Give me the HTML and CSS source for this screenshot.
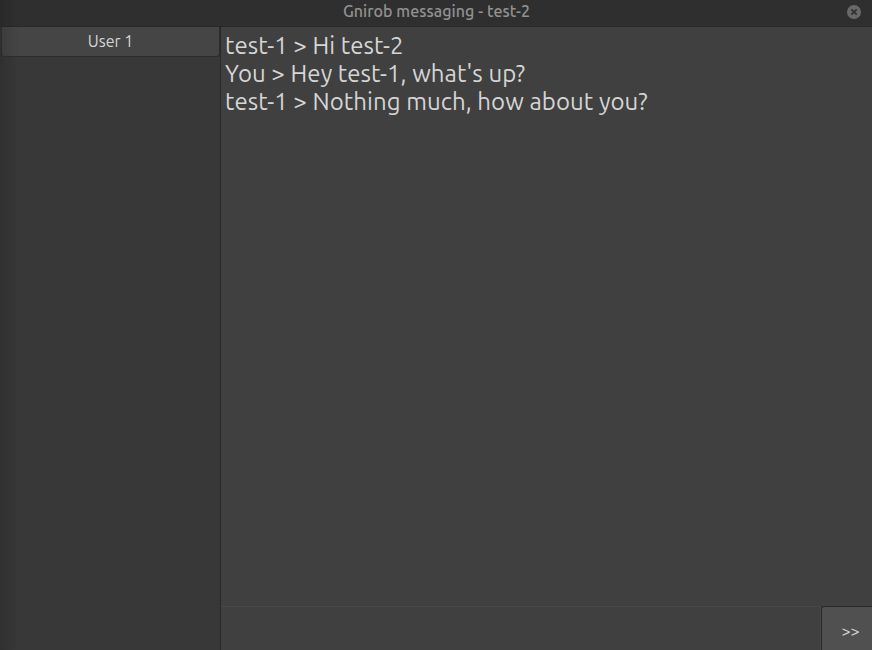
FILE: index.html
```html
<!DOCTYPE html>
<html lang="en">
<head>
<meta charset="utf-8">
<title>Gnirob messaging - test-2</title>
<link rel="stylesheet" href="styles.css">
</head>
<body>
<div class="window">
  <header class="titlebar">
    <h1 class="title">Gnirob messaging - test-2</h1>
    <button class="close" aria-label="Close">
      <svg width="14" height="14" viewBox="0 0 14 14"><circle cx="7" cy="7" r="7" fill="#69696c"/><path d="M4.3 4.3l5.4 5.4M9.7 4.3l-5.4 5.4" stroke="#303030" stroke-width="1.8"/></svg>
    </button>
  </header>
  <main class="body">
    <aside class="sidebar">
      <button class="user">User 1</button>
    </aside>
    <section class="chat">
      <div class="messages">
        <p class="message">test-1 &gt; Hi test-2</p>
        <p class="message">You &gt; Hey test-1, what's up?</p>
        <p class="message">test-1 &gt; Nothing much, how about you?</p>
      </div>
      <div class="composer">
        <div class="entry"></div>
        <button class="send">&gt;&gt;</button>
      </div>
    </section>
  </main>
</div>
</body>
</html>
```
FILE: styles.css
```css
* { box-sizing: border-box; }
body { margin: 0; font-family: Ubuntu, "Noto Sans", sans-serif; color: #d5d5d5; background: #404040; }
button { margin: 0; padding: 0; border: 0; background: none; color: inherit; font: inherit; }
.window { width: 872px; height: 650px; display: flex; flex-direction: column; overflow: hidden; }
.titlebar { height: 27px; flex: none; display: grid; grid-template-columns: 1fr auto 1fr; background: linear-gradient(90deg, #292929, #2f2f2f 18px); border-bottom: 1px solid #282828; }
.title { grid-column: 2; margin: 0; padding-left: 1px; font-size: 16px; line-height: 22px; font-weight: 500; letter-spacing: 0.05px; color: #929292; white-space: nowrap; }
.close { grid-column: 3; justify-self: end; width: 14px; height: 14px; margin: 5px 11px 0 0; }
.close svg { display: block; }
.body { flex: 1; display: flex; min-height: 0; }
.sidebar { width: 221px; flex: none; padding: 0 1px; background: linear-gradient(90deg, #303030, #383838 18px); border-right: 1px solid #292929; }
.user { display: block; width: 219px; height: 30px; padding-bottom: 1px; border: 1px solid #2c2c2c; border-top: 0; border-radius: 0 0 3px 3px; background: linear-gradient(90deg, #3d3d3d, #454545 18px); font-size: 16px; line-height: 28px; text-align: center; }
.chat { flex: 1; display: flex; flex-direction: column; min-width: 0; background: #404040; }
.messages { flex: 1; padding: 5px 4px; }
.message { margin: 0; font-size: 24px; line-height: 28px; letter-spacing: 0.07px; white-space: nowrap; }
.composer { height: 44px; flex: none; display: flex; }
.entry { flex: 1; border-top: 1px solid #484848; border-right: 1px solid #484848; }
.send { width: 51px; border-top: 1px solid #292929; border-left: 1px solid #292929; border-radius: 3px 0 0 0; background: #505050; font-size: 16px; line-height: 20px; padding: 4px 0 0 7px; }
```
